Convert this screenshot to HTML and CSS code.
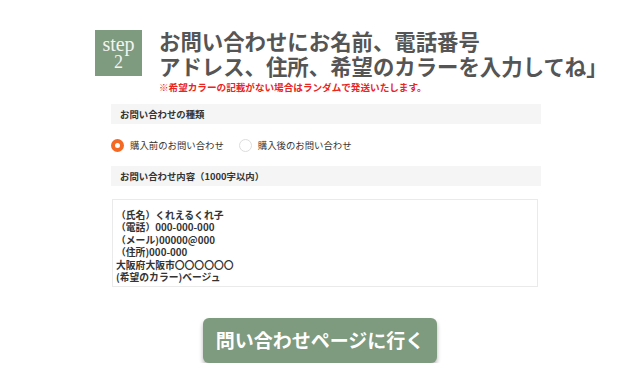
FILE: index.html
```html
<!DOCTYPE html>
<html lang="ja">
  <head>
    <meta charset="UTF-8" />
    <meta name="viewport" content="width=device-width, initial-scale=1.0" />
    <title>お問い合わせ</title>
    <link rel="stylesheet" href="styles.css">
  </head>
  <body>
    <div class="container">
      <!-- Step heading -->
      <div class="step-head">
        <div class="step-badge">
          <span class="step-word">step</span>
          <span class="step-num">2</span>
        </div>
        <div class="step-text">
          <h2>お問い合わせにお名前、電話番号<br />アドレス、住所、希望のカラーを入力してね」</h2>
          <p class="note">※希望カラーの記載がない場合はランダムで発送いたします。</p>
        </div>
      </div>

      <!-- Form sample -->
      <div class="form">
        <div class="field-label">お問い合わせの種類</div>
        <div class="radios">
          <label class="radio checked"><span class="dot"></span>購入前のお問い合わせ</label>
          <label class="radio"><span class="dot"></span>購入後のお問い合わせ</label>
        </div>
        <div class="field-label">お問い合わせ内容（1000字以内）</div>
        <div class="textarea">
          （氏名）くれえるくれ子<br />
          （電話）000-000-000<br />
          （メール)00000@000<br />
          （住所)000-000<br />
          大阪府大阪市〇〇〇〇〇〇<br />
          (希望のカラー)ベージュ
        </div>
      </div>

      <div class="actions">
        <a class="go-button" href="#">問い合わせページに行く</a>
      </div>
    </div>
  </body>
</html>
```

FILE: styles.css
```css
body {
  margin: 0;
  background-color: #fff;
  font-family: "Noto Sans CJK JP", "Noto Sans", sans-serif;
  color: #333;
}

.container {
  width: 450px;
  margin: 0 auto;
  padding-top: 30px;
}

.step-head {
  display: flex;
  align-items: flex-start;
}

.step-badge {
  width: 47px;
  height: 46px;
  background-color: #7e9a7f;
  color: #f2f4f0;
  font-family: "Liberation Serif", "DejaVu Serif", serif;
  display: flex;
  flex-direction: column;
  align-items: center;
  justify-content: center;
  flex-shrink: 0;
}

.step-word {
  font-size: 20px;
  line-height: 18px;
}

.step-num {
  font-size: 18px;
  line-height: 18px;
}

.step-text {
  margin-left: 17px;
  margin-top: -2px;
}

h2 {
  margin: 0;
  font-size: 21.4px;
  line-height: 25px;
  font-weight: bold;
  color: #555;
  white-space: nowrap;
}

.note {
  margin: 3px 0 0;
  font-size: 9.6px;
  line-height: 12px;
  font-weight: bold;
  color: #e8261e;
  white-space: nowrap;
}

.form {
  margin: 11px 4px 0 16px;
}

.field-label {
  background-color: #f5f5f5;
  height: 20px;
  line-height: 20px;
  padding-left: 9px;
  font-size: 9.4px;
  font-weight: bold;
  color: #333;
}

.radios {
  display: flex;
  align-items: center;
  height: 42px;
  gap: 15px;
}

.radio {
  display: flex;
  align-items: center;
  font-size: 9.4px;
  color: #333;
}

.dot {
  width: 13px;
  height: 13px;
  border-radius: 50%;
  border: 1px solid #ddd;
  box-sizing: border-box;
  margin-right: 6px;
  background-color: #fff;
}

.radio.checked .dot {
  border: 4px solid #f26a24;
}

.textarea {
  margin: 13px 3px 0 1px;
  border: 1px solid #eaeaea;
  height: 68px;
  padding: 9px 5px 9px 3px;
  font-size: 9.8px;
  line-height: 12.4px;
  color: #333;
  font-weight: bold;
}

.actions {
  display: flex;
  justify-content: center;
  margin-top: 31px;
}

.go-button {
  display: block;
  width: 234px;
  height: 45px;
  line-height: 43px;
  text-align: center;
  background-color: #7e9a7f;
  color: #fff;
  font-size: 19px;
  font-weight: bold;
  text-decoration: none;
  border-radius: 6px;
  box-shadow: 0 3px 4px rgba(0, 0, 0, 0.3);
}
```
